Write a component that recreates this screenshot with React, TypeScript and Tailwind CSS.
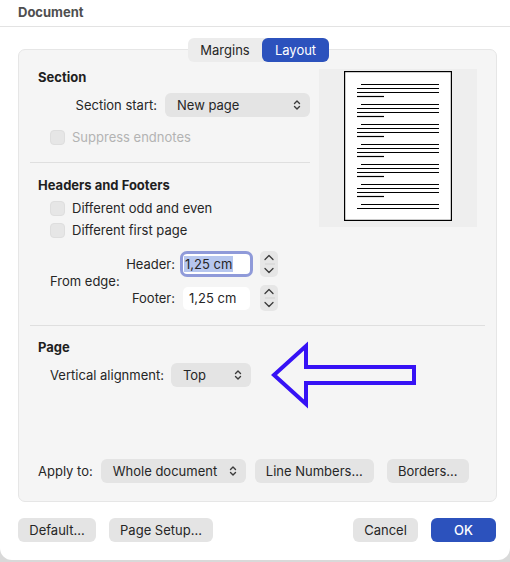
import React from "react";

const UpDown = () => (
  <svg width="8" height="12" viewBox="0 0 8 12" fill="none">
    <path d="M1.5 4.5 L4 2 L6.5 4.5 M1.5 7.5 L4 10 L6.5 7.5" stroke="#3a3a3a" strokeWidth="1.4" strokeLinecap="round" strokeLinejoin="round" />
  </svg>
);

const Select = ({ label, w }: { label: string; w: string }) => (
  <div className={`${w} h-[24px] bg-[#e4e4e4] rounded-[6px] flex items-center justify-between pl-[12px] pr-[9px] shrink-0`}>
    <span>{label}</span>
    <UpDown />
  </div>
);

const Btn = ({ label, w, primary }: { label: string; w: string; primary?: boolean }) => (
  <div
    className={`${w} h-[24px] rounded-[6px] flex items-center justify-center shrink-0 ${
      primary ? "bg-[#2c52bd] text-white font-medium" : "bg-[#e4e4e4]"
    }`}
  >
    {label}
  </div>
);

const Checkbox = () => <div className="w-[15px] h-[15px] rounded-[4px] bg-[#e6e6e6] border border-[#dedede] shrink-0" />;

const Stepper = () => (
  <div className="w-[18px] h-[26px] rounded-[5px] bg-[#e6e6e6] flex flex-col items-center justify-center shrink-0">
    <svg width="12" height="26" viewBox="0 0 12 26" fill="none">
      <path d="M2 8.5 L6 4.5 L10 8.5" stroke="#3a3a3a" strokeWidth="1.3" strokeLinecap="round" strokeLinejoin="round" />
      <line x1="2" y1="13" x2="16" y2="13" stroke="#d2d2d2" strokeWidth="1" />
      <path d="M2 17.5 L6 21.5 L10 17.5" stroke="#3a3a3a" strokeWidth="1.3" strokeLinecap="round" strokeLinejoin="round" />
    </svg>
  </div>
);

const PagePreview = () => {
  const lines: React.ReactNode[] = [];
  for (let g = 0; g < 7; g++) {
    const y0 = 13 + 20 * g;
    const segs: [number, number, number][] =
      g === 6
        ? [
            [17, 95, y0],
            [13, 95, y0 + 4],
          ]
        : [
            [17, 95, y0],
            [13, 95, y0 + 4],
            [13, 95, y0 + 8],
            [13, 40, y0 + 12],
          ];
    segs.forEach(([x1, x2, y], i) =>
      lines.push(<line key={`${g}-${i}`} x1={x1} x2={x2} y1={y + 0.5} y2={y + 0.5} stroke="#000" strokeWidth="1.2" />)
    );
  }
  return (
    <svg width="108" height="150" viewBox="0 0 108 150">
      <rect x="0.6" y="0.6" width="106.8" height="148.8" fill="#fff" stroke="#000" strokeWidth="1.2" />
      {lines}
    </svg>
  );
};

export default function App() {
  return (
    <div
      className="relative w-[510px] h-[562px] bg-[#d9d9d9] text-[13px] leading-[16px] text-[#262626]"
      style={{ fontFamily: "Inter, 'Noto Sans', sans-serif" }}
    >
      <div className="h-[560px] bg-white rounded-b-[12px] flex flex-col">
        {/* title bar */}
        <div className="h-[27px] border-b border-[#e3e3e3] pl-[18px] pt-[4px] shrink-0">
          <span className="font-bold text-[#4f4f4f]">Document</span>
        </div>

        {/* tabs */}
        <div className="mt-[11px] relative z-10 flex justify-center pl-[7px]">
          <div className="flex h-[24px] rounded-[6px] bg-[#ececec]">
            <div className="w-[74px] flex items-center justify-center">Margins</div>
            <div className="w-[67px] flex items-center justify-center bg-[#2c52bd] text-white rounded-[6px]">Layout</div>
          </div>
        </div>

        {/* panel */}
        <div className="-mt-[13px] ml-[18px] w-[479px] h-[453px] bg-[#f5f5f5] border border-[#e6e6e6] rounded-[7px] px-[11px] pt-[19px] pb-[18px] flex flex-col">
          <div className="flex gap-[9px]">
            {/* left column */}
            <div className="w-[280px] flex flex-col">
              <div className="pl-[8px] font-bold text-[#1f1f1f]">Section</div>
              <div className="mt-[8px] h-[24px] flex items-center justify-end gap-[8px]">
                <span>Section start:</span>
                <Select label="New page" w="w-[145px]" />
              </div>
              <div className="mt-[12px] flex items-center pl-[20px] gap-[7px]">
                <Checkbox />
                <span className="text-[#b3b3b3]">Suppress endnotes</span>
              </div>
              <div className="mt-[17px] h-px bg-[#dfdfdf]" />
              <div className="mt-[14px] pl-[8px] font-bold text-[#1f1f1f]">Headers and Footers</div>
              <div className="mt-[7px] flex items-center pl-[20px] gap-[7px]">
                <Checkbox />
                <span>Different odd and even</span>
              </div>
              <div className="mt-[6px] flex items-center pl-[20px] gap-[7px]">
                <Checkbox />
                <span>Different first page</span>
              </div>
              <div className="mt-[14px] flex items-center pl-[20px]">
                <span className="w-[70px] shrink-0">From edge:</span>
                <div className="flex flex-col gap-[10px]">
                  <div className="h-[24px] flex items-center">
                    <span className="w-[55px] text-right">Header:</span>
                    <div className="ml-[8px] w-[67px] h-[20px] bg-white rounded-[4px] ring-[3px] ring-[#8f9ad9] flex items-center pl-[1px]">
                      <span className="bg-[#b6c6ee] px-[1px]">1,25 cm</span>
                    </div>
                    <div className="ml-[10px]">
                      <Stepper />
                    </div>
                  </div>
                  <div className="h-[24px] flex items-center">
                    <span className="w-[55px] text-right">Footer:</span>
                    <div className="ml-[8px] w-[67px] h-[23px] bg-white rounded-[5px] flex items-center pl-[6px]">
                      1,25 cm
                    </div>
                    <div className="ml-[10px]">
                      <Stepper />
                    </div>
                  </div>
                </div>
              </div>
            </div>
            {/* preview */}
            <div className="w-[158px] h-[158px] bg-[#eeeeee] flex justify-center pt-[2px] shrink-0">
              <PagePreview />
            </div>
          </div>

          <div className="mt-[15px] h-px bg-[#dfdfdf]" />
          <div className="mt-[13px] pl-[8px] font-bold text-[#1f1f1f]">Page</div>
          <div className="mt-[8px] h-[24px] flex items-center pl-[20px] gap-[7px]">
            <span>Vertical alignment:</span>
            <Select label="Top" w="w-[80px]" />
          </div>

          <div className="flex-1" />

          <div className="h-[24px] flex items-center pl-[8px]">
            <span>Apply to:</span>
            <div className="ml-[8px]">
              <Select label="Whole document" w="w-[145px]" />
            </div>
            <div className="ml-[9px]">
              <Btn label="Line Numbers..." w="w-[119px]" />
            </div>
            <div className="ml-[13px]">
              <Btn label="Borders..." w="w-[82px]" />
            </div>
          </div>
        </div>

        {/* bottom buttons */}
        <div className="mt-[16px] flex items-center justify-between pl-[18px] pr-[14px]">
          <div className="flex gap-[13px]">
            <Btn label="Default..." w="w-[78px]" />
            <Btn label="Page Setup..." w="w-[104px]" />
          </div>
          <div className="flex gap-[13px]">
            <Btn label="Cancel" w="w-[65px]" />
            <Btn label="OK" w="w-[65px]" primary />
          </div>
        </div>
      </div>

      {/* annotation arrow */}
      <svg className="absolute left-[268px] top-[340px]" width="152" height="70" viewBox="0 0 152 70" fill="none">
        <path d="M6 35 L38 6 L38 27 L146 27 L146 43 L38 43 L38 64 Z" stroke="#3612f5" strokeWidth="4" strokeLinejoin="miter" />
      </svg>
    </div>
  );
}
